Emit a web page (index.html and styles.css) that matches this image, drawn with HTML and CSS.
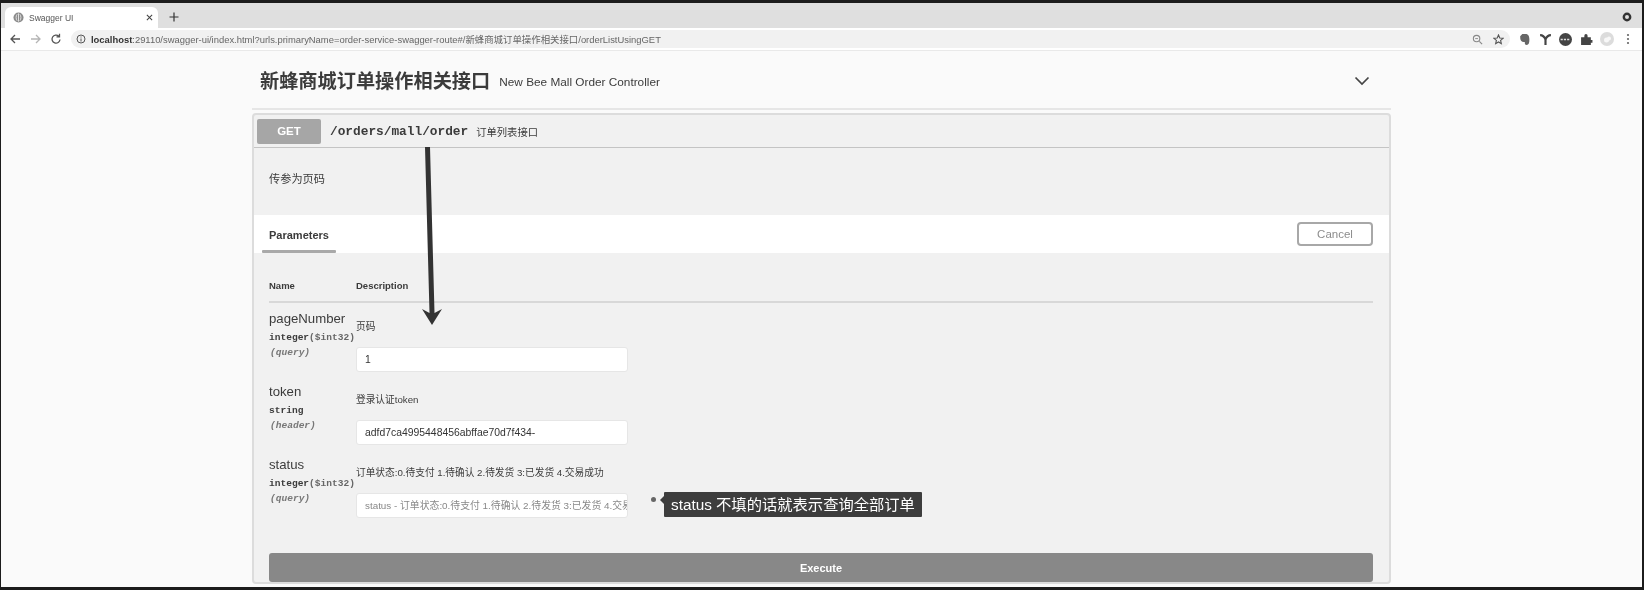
FILE: index.html
```html
<!DOCTYPE html>
<html lang="zh-CN">
<head>
<meta charset="utf-8">
<title>Swagger UI</title>
<link rel="stylesheet" href="styles.css">
</head>
<body>
<div class="frame">
  <div class="tabstrip">
    <div class="tab">
      <svg class="favicon" viewBox="0 0 12 12"><circle cx="6" cy="6" r="5.5" fill="#8a8a8a"/><path d="M4.500 2.500C3 4 3 8 4.500 9.500M7.500 2.500C9 4 9 8 7.500 9.500M6 1.500V10.500" stroke="#e8e8e8" fill="none"/></svg>
      <span class="tab-title">Swagger UI</span>
      <svg class="tab-x" viewBox="0 0 8 8"><path d="M1 1L7 7M7 1L1 7" stroke="#444" stroke-width="1.200"/></svg>
    </div>
    <svg class="plus" viewBox="0 0 10 10"><path d="M5 0.500V9.500M0.500 5H9.500" stroke="#333" stroke-width="1.200"/></svg>
    <svg class="rec" viewBox="0 0 10 10"><circle cx="5" cy="5" r="3.200" fill="none" stroke="#333" stroke-width="2.400"/></svg>
  </div>
  <div class="toolbar">
    <svg class="nav" viewBox="0 0 12 12"><path d="M11 6H2M6 2L2 6L6 10" fill="none" stroke="#555" stroke-width="1.300"/></svg>
    <svg class="nav" viewBox="0 0 12 12"><path d="M1 6H10M6 2L10 6L6 10" fill="none" stroke="#b5b5b5" stroke-width="1.300"/></svg>
    <svg class="nav" viewBox="0 0 12 12"><path d="M10 6.500A4 4 0 1 1 8.800 3.200M9.500 0.800V3.800H6.500" fill="none" stroke="#555" stroke-width="1.300"/></svg>
    <div class="omnibox">
      <svg class="info" viewBox="0 0 10 10"><circle cx="5" cy="5" r="4" fill="none" stroke="#555"/><path d="M5 4.500V7.500M5 2.500V3.500" stroke="#555"/></svg>
      <span class="url"><b>localhost</b>:29110/swagger-ui/index.html?urls.primaryName=order-service-swagger-route#/新蜂商城订单操作相关接口/orderListUsingGET</span>
      <svg class="omni-icon" viewBox="0 0 12 12"><circle cx="5" cy="5" r="3.500" fill="none" stroke="#888" stroke-width="1.200"/><path d="M8 8L11 11" stroke="#888" stroke-width="1.300"/><path d="M3.500 5H6.500" stroke="#888"/></svg>
      <svg class="omni-icon" viewBox="0 0 12 12"><path d="M6 1L7.400 4.400L11 4.700L8.300 7L9.100 10.600L6 8.700L2.900 10.600L3.700 7L1 4.700L4.600 4.400Z" fill="none" stroke="#555" stroke-width="1.200"/></svg>
    </div>
    <div class="extensions">
      <svg class="ext" viewBox="0 0 12 12"><path d="M2 3L4 1H7C9.500 1 10.500 3 10.500 6C10.500 9 10 11 8 11C6.500 11 6 10 6.500 8.500L4 8C2.500 7.500 2 6 2 3Z" fill="#666"/></svg>
      <svg class="ext" viewBox="0 0 12 12"><path d="M1 2C3.500 2 5 3.500 6 6C7 3.500 8.500 2 11 2M6 6V11" fill="none" stroke="#444" stroke-width="2"/></svg>
      <svg class="ext" viewBox="0 0 12 12"><circle cx="6" cy="6" r="6" fill="#444"/><path d="M1.500 6H10.500" stroke="#ddd" stroke-width="1.500" stroke-dasharray="2 1"/></svg>
      <svg class="ext" viewBox="0 0 12 12"><path d="M1 4H4V2.500A1.500 1.500 0 0 1 7 2.500V4H10V6.500H11.500V9H10V11H1Z" fill="#444"/></svg>
      <svg class="avatar" viewBox="0 0 14 14"><circle cx="7" cy="7" r="7" fill="#dcdcdc"/><circle cx="6.500" cy="8" r="2.500" fill="#f8f8f8"/><circle cx="9" cy="6.500" r="2" fill="#f8f8f8"/></svg>
      <svg class="kebab" viewBox="0 0 4 12"><circle cx="2" cy="2" r="1.100" fill="#666"/><circle cx="2" cy="6" r="1.100" fill="#666"/><circle cx="2" cy="10" r="1.100" fill="#666"/></svg>
    </div>
  </div>
  <main class="page">
    <div class="column">
      <header class="section-head">
        <h3 class="section-title">新蜂商城订单操作相关接口</h3>
        <span class="section-desc">New Bee Mall Order Controller</span>
        <svg class="chevron" viewBox="0 0 16 10"><path d="M1.500 1.500L8 8L14.500 1.500" fill="none" stroke="#444" stroke-width="1.700"/></svg>
      </header>
      <section class="opblock">
        <div class="summary">
          <span class="method">GET</span>
          <span class="path">/orders/mall/order</span>
          <span class="summary-text">订单列表接口</span>
        </div>
        <div class="op-desc">传参为页码</div>
        <div class="tabs">
          <span class="tab-label">Parameters</span>
          <button class="cancel">Cancel</button>
        </div>
        <div class="params">
          <div class="param-head"><span class="col-name">Name</span><span>Description</span></div>
          <div class="param">
            <div class="param-name"><div class="pname">pageNumber</div><div class="ptype">integer<span>($int32)</span></div><div class="pin">(query)</div></div>
            <div class="param-body"><div class="pdesc">页码</div><div class="input">1</div></div>
          </div>
          <div class="param">
            <div class="param-name"><div class="pname">token</div><div class="ptype">string</div><div class="pin">(header)</div></div>
            <div class="param-body"><div class="pdesc">登录认证token</div><div class="input">adfd7ca4995448456abffae70d7f434-</div></div>
          </div>
          <div class="param">
            <div class="param-name"><div class="pname">status</div><div class="ptype">integer<span>($int32)</span></div><div class="pin">(query)</div></div>
            <div class="param-body"><div class="pdesc">订单状态:0.待支付 1.待确认 2.待发货 3:已发货 4.交易成功</div><div class="input placeholder">status - 订单状态:0.待支付 1.待确认 2.待发货 3:已发货 4.交易成功</div></div>
          </div>
          <button class="execute">Execute</button>
        </div>
      </section>
    </div>
    <svg class="arrow" viewBox="0 0 24 178"><path d="M5 0H10L14.500 166L22 162L12 178L2 162L9.500 166Z" fill="#333"/></svg>
    <div class="note"><i class="note-dot"></i><span class="note-text">status 不填的话就表示查询全部订单</span></div>
  </main>
</div>
</body>
</html>
```
FILE: styles.css
```css
* { box-sizing: border-box; }
html, body { margin: 0; padding: 0; background: #1c1c1c; }
body { font-family: "Liberation Sans", "Noto Sans CJK SC", sans-serif; color: #3b3b3b; }
.frame {
  width: 1644px; height: 590px; overflow: hidden;
  border: solid #1c1c1c; border-width: 3px 2px 3px 1px;
  display: flex; flex-direction: column;
  filter: blur(0.6px);
}
.tabstrip { height: 25px; flex: none; background: #dfdfdf; display: flex; align-items: flex-end; padding-left: 4px; }
.tab { width: 153px; height: 21px; background: #fff; border-radius: 6px 6px 0 0; display: flex; align-items: center; padding: 0 5px 0 8px; }
.favicon { width: 11px; height: 11px; flex: none; }
.tab-title { font-size: 8.500px; color: #555; margin-left: 5px; flex: 1; }
.tab-x { width: 7px; height: 7px; }
.plus { width: 10px; height: 10px; margin: 0 0 6px 11px; }
.rec { width: 10px; height: 10px; margin: 0 10px 6px auto; }
.toolbar { height: 23px; flex: none; background: #fff; border-bottom: 1px solid #e9e9e9; display: flex; align-items: center; padding-left: 8px; }
.nav { width: 12px; height: 12px; margin-right: 8.500px; flex: none; }
.omnibox { width: 1439px; height: 18px; background: #f1f1f1; border-radius: 9px; display: flex; align-items: center; padding: 0 5.500px 0 5px; flex: none; }
.info { width: 10px; height: 10px; flex: none; }
.url { font-size: 9.410px; color: #666; margin-left: 5.500px; flex: 1; white-space: nowrap; }
.url b { color: #333; font-weight: 700; }
.omni-icon { width: 11px; height: 11px; margin-left: 10px; flex: none; }
.extensions { display: flex; align-items: center; padding-left: 8.500px; }
.ext { width: 13px; height: 13px; margin-right: 7.500px; flex: none; }
.avatar { width: 14px; height: 14px; flex: none; margin-right: 12px; }
.kebab { width: 4px; height: 12px; flex: none; }
.page { flex: 1; background: #fafafa; position: relative; padding-left: 251px; min-height: 0; }
.column { width: 1139px; }
.section-head { height: 59px; border-bottom: 2px solid #e6e6e6; padding: 5px 21px 0 8px; display: flex; align-items: center; }
.section-title { margin: 0; font-size: 19.200px; font-weight: 700; color: #3b3b3b; line-height: 1; }
.section-desc { font-size: 11.800px; margin-left: 9px; color: #3b3b3b; }
.chevron { width: 16px; height: 10px; margin: -2px 0 0 auto; }
.opblock { margin-top: 3px; border: 2px solid #dcdcdc; border-radius: 4px; background: #f1f1f1; }
.summary { height: 33px; border-bottom: 1px solid #c4c4c4; display: flex; align-items: center; padding-left: 3px; }
.method { width: 64px; height: 25px; background: #a6a6a6; border-radius: 2px; color: #fff; font-size: 11.500px; font-weight: 700; display: flex; align-items: center; justify-content: center; }
.path { font-family: "Liberation Mono", monospace; font-weight: 700; font-size: 12.800px; margin-left: 9px; color: #3b3b3b; }
.summary-text { font-size: 10.300px; margin-left: 8px; color: #3b3b3b; }
.op-desc { height: 67px; padding: 23px 0 0 15px; font-size: 11.200px; line-height: 16px; color: #3b3b3b; }
.tabs { height: 38px; background: #fff; position: relative; display: flex; align-items: center; justify-content: space-between; padding: 0 16px 0 15px; }
.tab-label { font-size: 11px; font-weight: 700; color: #3b3b3b; margin-top: 1px; }
.tab-label::after { content: ""; position: absolute; left: 8px; bottom: 0; width: 74px; height: 3px; background: #a9a9a9; border-radius: 1px; }
.cancel { width: 76px; height: 24px; background: #fff; border: 2px solid #a8a8a8; border-radius: 4px; font: 400 11.500px "Liberation Sans", sans-serif; color: #8c8c8c; }
.params { padding: 27px 16px 0 15px; }
.param-head { display: flex; font-size: 9.500px; font-weight: 700; color: #3b3b3b; border-bottom: 2px solid #d8d8d8; height: 23px; line-height: 12px; }
.col-name { width: 87px; }
.param { display: flex; height: 73px; padding-top: 9px; }
.param-name { width: 87px; flex: none; }
.pname { font-size: 13.200px; line-height: 17px; color: #3b3b3b; white-space: nowrap; margin-top: -2px; }
.ptype { font-family: "Liberation Mono", monospace; font-weight: 700; font-size: 9.550px; line-height: 11px; margin-top: 5px; white-space: nowrap; }
.ptype span { color: #666; }
.pin { font-family: "Liberation Mono", monospace; font-style: italic; font-weight: 700; font-size: 9.550px; line-height: 11px; margin-top: 4px; color: #777; margin-left: 1px; }
.param-body { width: 272px; padding-top: 8px; }
.pdesc { font-size: 9.700px; line-height: 13px; white-space: nowrap; }
.input { height: 25px; margin-top: 14px; background: #fff; border: 1px solid #e6e6e6; border-radius: 3px; font-size: 10.400px; line-height: 23px; padding: 0 8px; white-space: nowrap; overflow: hidden; color: #333; }
.placeholder { color: #888; font-size: 9.850px; }
.execute { display: block; width: 100%; height: 29px; margin-top: 31px; background: #888; border: 0; border-radius: 3px; color: #fff; font: 700 11px "Liberation Sans", sans-serif; }
.arrow { position: absolute; left: 419px; top: 96px; width: 24px; height: 178px; }
.note { position: absolute; left: 650px; top: 441px; display: flex; align-items: flex-start; }
.note-dot { width: 5px; height: 5px; border-radius: 50%; background: #666; margin-top: 5px; margin-right: 8px; }
.note-text { position: relative; background: #3d3d3d; color: #fff; font-size: 15.300px; height: 25px; line-height: 25px; padding: 0 7px; border-radius: 1px; white-space: nowrap; }
.note-text::before { content: ""; position: absolute; left: -4px; top: 4px; border: 4px solid transparent; border-left: 0; border-right-color: #3d3d3d; }
```
